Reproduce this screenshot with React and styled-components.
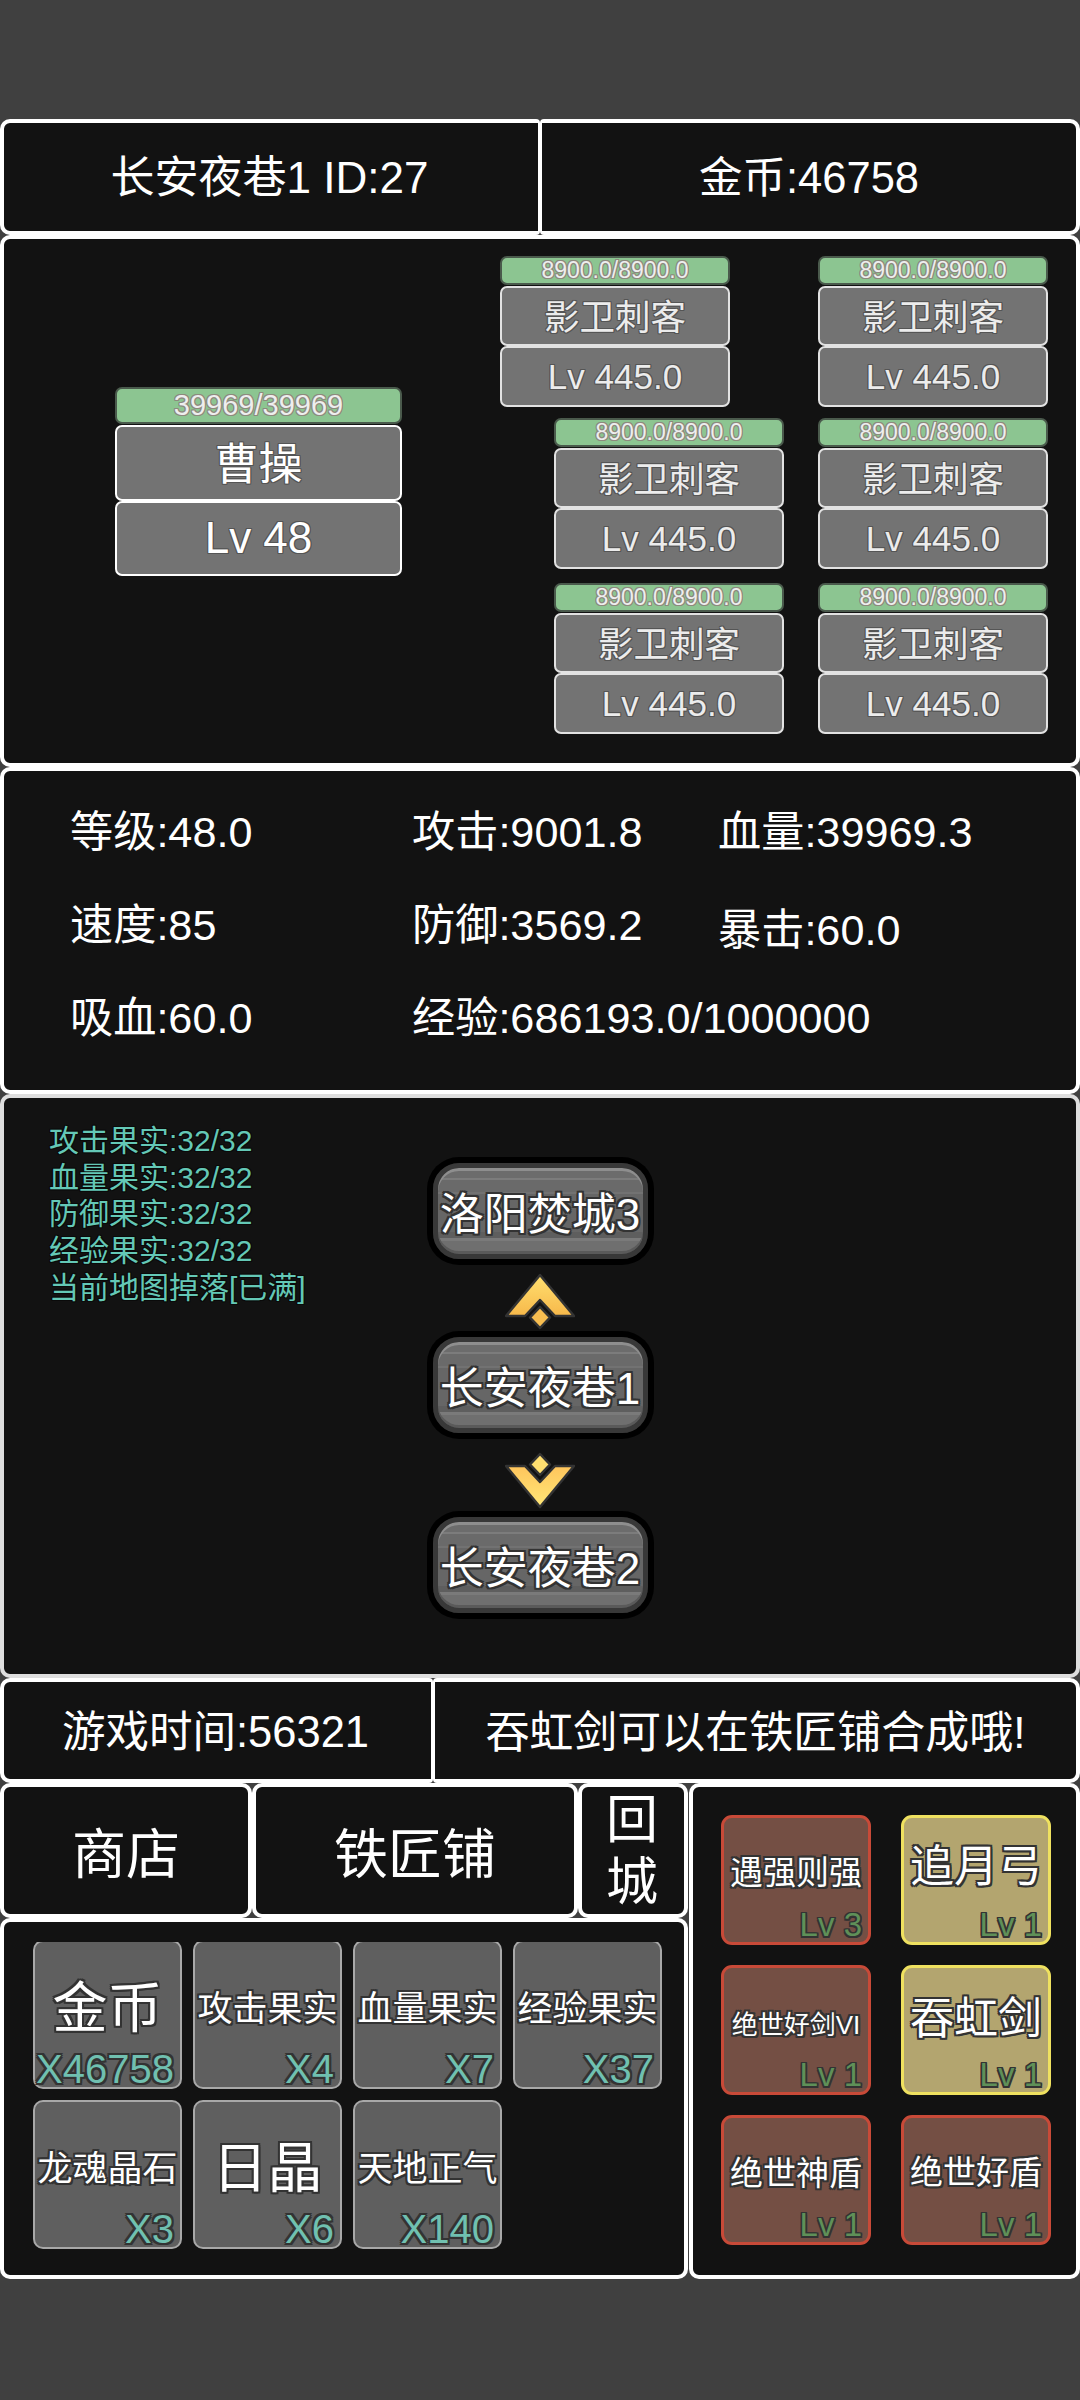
import React from "react";
import styled, { createGlobalStyle, css } from "styled-components";

const FONT = `"Liberation Sans", "Noto Sans CJK SC", sans-serif`;
const outline = (c, w = 2) => `${w}px 0 0 ${c}, -${w}px 0 0 ${c}, 0 ${w}px 0 ${c}, 0 -${w}px 0 ${c}, ${w}px ${w}px 0 ${c}, -${w}px ${w}px 0 ${c}, ${w}px -${w}px 0 ${c}, -${w}px -${w}px 0 ${c}`;

const Global = createGlobalStyle`
  html, body { margin: 0; padding: 0; background: #404040; }
  * { box-sizing: border-box; }
`;

const Page = styled.div`
  width: 1080px; height: 2400px; padding-top: 119px; background: #404040;
  font-family: ${FONT}; color: #fff; overflow: hidden;
`;
const Row = styled.div`display: flex; height: ${p => p.$h}px;`;
const Panel = styled.div`
  background: #121212; border: 4px solid ${p => p.$line || "#fff"}; border-radius: 10px;
  flex: ${p => (p.$w ? `0 0 ${p.$w}px` : "1 1 0")};
  min-width: 0;
`;
const Cell = styled(Panel)`
  display: flex; align-items: center; justify-content: center;
  font-size: ${p => p.$size || 43.5}px; white-space: nowrap;
  line-height: ${p => p.$lh || "normal"};
  text-align: center;
  padding-bottom: ${p => p.$up || 0}px;
  padding-right: ${p => p.$pull || 0}px;
  ${p => p.$thin && css`border-${p.$thin}-width: 2.5px;`}
  ${p => p.$thin === "right" ? "border-top-right-radius: 4px; border-bottom-right-radius: 4px;" : ""}
  ${p => p.$thin === "left" ? "border-top-left-radius: 4px; border-bottom-left-radius: 4px;" : ""}
`;

/* battle */
const Battle = styled(Panel)`display: flex; height: 100%; padding: 0 28px 0 111px;`;
const HeroSlot = styled.div`width: 287px; padding-top: 148px; flex: none;`;
const Formation = styled.div`flex: 1; display: flex; flex-direction: column; padding-top: 17px; gap: 11px;`;
const FormRow = styled.div`
  display: flex; justify-content: flex-end; gap: ${p => p.$gap}px; margin-top: ${p => p.$top || 0}px;
`;
const Unit = styled.div`width: ${p => p.$w}px; flex: none;`;
const Hp = styled.div`
  height: ${p => p.$h}px; background: #8cc591; border: 2px solid #4a5a4c; border-radius: 7px;
  color: #eee; font-size: ${p => p.$size}px; line-height: ${p => p.$h - 4}px; text-align: center;
  text-shadow: ${outline("#8d8a7e", 1)};
  margin-bottom: 1px;
`;
const UnitBox = styled.div`
  height: ${p => p.$h}px; background: #737373; border: 2px solid ${p => p.$dim ? "#e2e2e2" : "#fff"}; border-radius: 7px;
  display: flex; align-items: center; justify-content: center;
  font-size: ${p => p.$size}px; color: ${p => (p.$dim ? "#ececec" : "#fff")};
  padding-bottom: ${p => p.$up || 0}px;
  text-shadow: ${outline("#555", 1)};
`;

/* stats */
const Stats = styled(Panel)`
  height: 100%; display: grid; grid-template-columns: 342px 306px 1fr; grid-auto-rows: 93px;
  padding: 10px 0 0 66px; align-items: center; font-size: 43.2px; white-space: nowrap;
`;
const Stat = styled.div`
  ${p => p.$drop && css`padding-top: ${p.$drop}px;`}
  ${p => p.$span && css`grid-column: span ${p.$span};`}
`;

/* map */
const MapPanel = styled(Panel)`
  height: 100%; display: grid; grid-template-columns: 1fr 226px 1fr;
`;
const Fruits = styled.div`
  padding: 25px 0 0 45px; font-size: 30px; line-height: 36.7px; color: #64c8b6; white-space: nowrap;
  text-shadow: ${outline("#0a0a0a", 1)};
`;
const Route = styled.div`
  display: flex; flex-direction: column; align-items: center; padding-top: 59px;
`;
const MapBtn = styled.div`
  width: 215px; height: 96px; flex: none; margin: 6px 0;
  border: 5px solid #383838; border-radius: 26px;
  box-shadow: 0 0 0 6px #000, inset 0 3px 0 #8e8e8e, inset 0 -3px 0 #5a5a5a;
  background: linear-gradient(180deg,
    #6c6c6c 0 10px, #7c7c7c 10px 12px, #6a6a6a 12px 24px, #727272 24px 26px,
    #666 26px 64px, #5e5e5e 64px 70px, #7a7a7a 70px 73px, #6f6f6f 73px 100%);
  display: flex; align-items: center; justify-content: center;
  font-size: 44px; white-space: nowrap;
  text-shadow: ${outline("#333", 2)};
`;
const ArrowWrap = styled.div`
  height: ${p => p.$h}px; flex: none; display: flex; align-items: center; justify-content: center;
  padding-top: ${p => p.$drop}px;
`;

/* items */
const BottomSplit = styled.div`display: flex; height: 496px; gap: 1px;`;
const LeftCol = styled.div`flex: 0 0 688px; display: flex; flex-direction: column;`;
const Inventory = styled(Panel)`flex: 1 1 0;`;
const Clip = styled.div`
  margin: 20px 0 0 29px; width: 640px; height: 308px; overflow: hidden;
`;
const ItemGrid = styled.div`
  display: grid; grid-template-columns: repeat(4, 149px); grid-auto-rows: 149px; gap: 11px;
  margin-top: -2px;
`;
const Item = styled.div`
  background: #5f5f5f; border: 2px solid #a8a8a8; border-radius: 10px;
  display: flex; flex-direction: column;
`;
const ItemName = styled.div`
  flex: 1; display: flex; justify-content: center; white-space: nowrap; line-height: 1;
  font-size: ${p => p.$size}px; padding-top: ${p => 66 - p.$size / 2}px;
  text-shadow: ${outline("#333", 2)};
`;
const ItemCount = styled.div`
  text-align: right; padding-right: 6px; font-size: 40px; line-height: 36px; white-space: nowrap;
  color: #70c0b0; text-shadow: ${outline("#333", 2)};
`;

const Gear = styled(Panel)`
  height: 100%;
  display: grid; grid-template-columns: repeat(2, 150px); grid-auto-rows: 130px; column-gap: 30px; row-gap: 20px;
  padding: 28px 0 0 28px;
`;
const GearCard = styled.div`
  border-radius: 11px; border: 3px solid ${p => (p.$gold ? "#efe160" : "#c84a38")};
  background: ${p => (p.$gold ? "#b3a56f" : "#744f44")};
  display: flex; flex-direction: column;
`;
const GearName = styled.div`
  flex: 1; display: flex; justify-content: center; white-space: nowrap; line-height: 1;
  font-size: ${p => p.$size}px; padding-top: ${p => p.$top}px;
  text-shadow: ${outline("#333", 2)};
`;
const GearLv = styled.div`
  text-align: right; padding-right: 6px; font-size: 33px; line-height: 34px; white-space: nowrap;
  color: #5f9058; text-shadow: ${outline("#333", 1.5)};
`;

const Arrow = ({ down }) => (
  <svg width="70" height="57" viewBox="-1 -1 70 57" style={down ? { transform: "scaleY(-1)" } : undefined}>
    <defs>
      <linearGradient id={down ? "gd" : "gu"} x1="0" y1={down ? "1" : "0"} x2="0" y2={down ? "0" : "1"}>
        <stop offset="0" stopColor={down ? "#ffc55c" : "#ffe070"} />
        <stop offset="1" stopColor={down ? "#ffe878" : "#f7b84a"} />
      </linearGradient>
    </defs>
    <path d="M34 1 L68 42 L49 42 L34 26 L19 42 L0 42 Z" fill={`url(#${down ? "gd" : "gu"})`} stroke="#333" strokeWidth="2.5" strokeLinejoin="round" />
    <path d="M34 33 L44 43.5 L34 54 L24 43.5 Z" fill={down ? "#ffdf70" : "#f7bd50"} stroke="#333" strokeWidth="2.5" strokeLinejoin="round" />
  </svg>
);

const Enemy = () => (
  <Unit $w={230}>
    <Hp $h={29} $size={23}>8900.0/8900.0</Hp>
    <UnitBox $dim $h={60} $size={35.5} $up={3}>影卫刺客</UnitBox>
    <UnitBox $dim $h={61} $size={35}>Lv 445.0</UnitBox>
  </Unit>
);

const items = [
  ["金币", 55, "X46758"], ["攻击果实", 35, "X4"], ["血量果实", 35, "X7"], ["经验果实", 35, "X37"],
  ["龙魂晶石", 35, "X3"], ["日晶", 55, "X6"], ["天地正气", 35, "X140"],
];
const gear = [
  ["遇强则强", 33, 3, false, 38], ["追月弓", 44, 1, true, 27],
  ["绝世好剑VI", 26, 1, false, 44], ["吞虹剑", 44, 1, true, 29],
  ["绝世神盾", 33, 1, false, 39], ["绝世好盾", 33, 1, false, 38],
];

export default function App() {
  return (
    <Page>
      <Global />
      <Row $h={116}>
        <Cell $w={540} $thin="right" $up={6} $pull={3} $size={44}>长安夜巷1 ID:27</Cell>
        <Cell $thin="left" $up={6}>金币:46758</Cell>
      </Row>
      <Row $h={532}>
        <Battle>
          <HeroSlot>
            <Unit $w={287}>
              <Hp $h={37} $size={29}>39969/39969</Hp>
              <UnitBox $h={76} $size={44} $up={4}>曹操</UnitBox>
              <UnitBox $h={75} $size={44} $up={2}>Lv 48</UnitBox>
            </Unit>
          </HeroSlot>
          <Formation>
            <FormRow $gap={88}><Enemy /><Enemy /></FormRow>
            <FormRow $gap={34}><Enemy /><Enemy /></FormRow>
            <FormRow $gap={34} $top={3}><Enemy /><Enemy /></FormRow>
          </Formation>
        </Battle>
      </Row>
      <Row $h={327}>
        <Stats>
          <Stat>等级:48.0</Stat><Stat>攻击:9001.8</Stat><Stat>血量:39969.3</Stat>
          <Stat>速度:85</Stat><Stat>防御:3569.2</Stat><Stat $drop={10}>暴击:60.0</Stat>
          <Stat>吸血:60.0</Stat><Stat $span={2}>经验:686193.0/1000000</Stat>
        </Stats>
      </Row>
      <Row $h={584}>
        <MapPanel $line="#dedede">
          <Fruits>
            <div>攻击果实:32/32</div>
            <div>血量果实:32/32</div>
            <div>防御果实:32/32</div>
            <div>经验果实:32/32</div>
            <div>当前地图掉落[已满]</div>
          </Fruits>
          <Route>
            <MapBtn>洛阳焚城3</MapBtn>
            <ArrowWrap $h={66} $drop={6}><Arrow /></ArrowWrap>
            <MapBtn>长安夜巷1</MapBtn>
            <ArrowWrap $h={72} $drop={10}><Arrow down /></ArrowWrap>
            <MapBtn>长安夜巷2</MapBtn>
          </Route>
          <div />
        </MapPanel>
      </Row>
      <Row $h={105}>
        <Cell $w={433} $thin="right" $up={4} $pull={4}>游戏时间:56321</Cell>
        <Cell $thin="left" $up={4} $size={44}>吞虹剑可以在铁匠铺合成哦!</Cell>
      </Row>
      <BottomSplit>
        <LeftCol>
          <Row $h={135}>
            <Cell $w={252} $size={54}>商店</Cell>
            <Cell $w={326} $size={54}>铁匠铺</Cell>
            <Cell $size={52} $lh="62px" $pull={2}>回<br />城</Cell>
          </Row>
          <Inventory>
            <Clip>
              <ItemGrid>
                {items.map(([n, s, c]) => (
                  <Item key={n}>
                    <ItemName $size={s}>{n}</ItemName>
                    <ItemCount>{c}</ItemCount>
                  </Item>
                ))}
              </ItemGrid>
            </Clip>
          </Inventory>
        </LeftCol>
        <Gear>
          {gear.map(([n, s, l, g, t]) => (
            <GearCard key={n} $gold={g}>
              <GearName $size={s} $top={t}>{n}</GearName>
              <GearLv>Lv {l}</GearLv>
            </GearCard>
          ))}
        </Gear>
      </BottomSplit>
    </Page>
  );
}
